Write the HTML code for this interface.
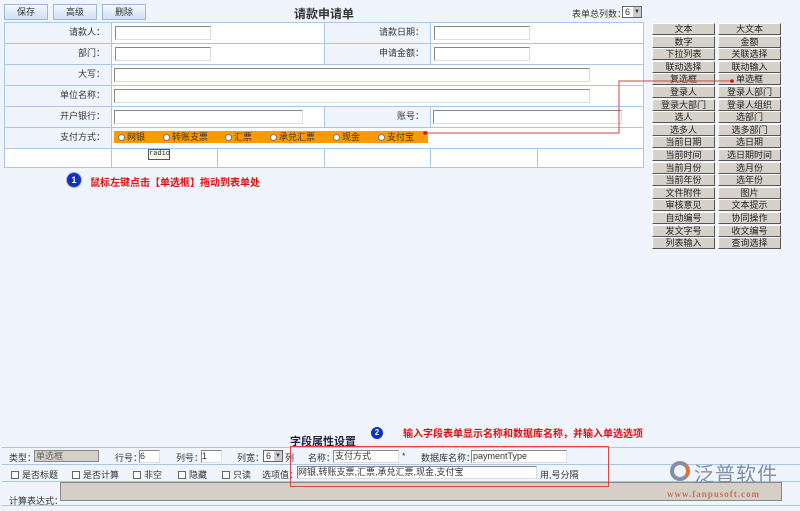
<!DOCTYPE html><html><head><meta charset="utf-8"><style>
*{box-sizing:border-box;margin:0;padding:0}
body{width:800px;height:511px;background:#f0f5fd;font:9px "Liberation Sans","Noto Sans CJK SC",sans-serif;color:#333;position:relative;overflow:hidden}
.a{position:absolute}
.btn{position:absolute;top:4px;height:16px;width:44px;background:linear-gradient(#f4f8ff,#cfdff5);border:1px solid #9ab8e0;text-align:center;line-height:14px;font-size:9px}
.cell{position:absolute;border:1px solid #a8c8ea;background:#fff}
.lab{background:#f0f5fd;text-align:right;padding-right:6px;line-height:19px}
.inp{position:absolute;background:#fff;border:1px solid #888;border-right-color:#ddd;border-bottom-color:#ddd;height:14px}
.rb{position:absolute;width:63px;height:12px;background:#d6d2ca;border:1px solid #fff;border-right-color:#555;border-bottom-color:#555;text-align:center;font-size:9px;line-height:11px;color:#222}
.cb{display:inline-block;width:8px;height:8px;border:1px solid #666;background:#fff;vertical-align:-1px;margin-right:3px}
.r{display:inline-block;width:7px;height:7px;border-radius:50%;background:#fff;border:1px solid #777;margin-right:2px;vertical-align:-1px}
</style></head><body>
<div class="btn" style="left:4px">保存</div>
<div class="btn" style="left:53px">高级</div>
<div class="btn" style="left:102px">删除</div>
<div class="a" style="left:294px;top:5px;font-size:12px;font-weight:bold;color:#333">请款申请单</div>
<div class="a" style="left:572px;top:7px">表单总列数：</div>
<div class="a" style="left:622px;top:6px;width:20px;height:12px;border:1px solid #666;background:#fff;font-size:9px;line-height:10px;padding-left:2px">6<span style="position:absolute;right:0;top:0;width:8px;height:10px;background:#ccc;font-size:6px;text-align:center">▼</span></div>

<div class="a" style="left:4px;top:22px;width:640px;height:146px;background:#fff;border:1px solid #a8c8ea"></div>
<div class="cell lab" style="left:4px;top:22px;width:108px;height:22px">请款人：</div>
<div class="cell" style="left:111px;top:22px;width:214px;height:22px"></div>
<div class="cell lab" style="left:324px;top:22px;width:107px;height:22px">请款日期：</div>
<div class="cell" style="left:430px;top:22px;width:214px;height:22px"></div>
<div class="cell lab" style="left:4px;top:43px;width:108px;height:22px">部门：</div>
<div class="cell" style="left:111px;top:43px;width:214px;height:22px"></div>
<div class="cell lab" style="left:324px;top:43px;width:107px;height:22px">申请金额：</div>
<div class="cell" style="left:430px;top:43px;width:214px;height:22px"></div>
<div class="cell lab" style="left:4px;top:64px;width:108px;height:22px">大写：</div>
<div class="cell" style="left:111px;top:64px;width:533px;height:22px"></div>
<div class="cell lab" style="left:4px;top:85px;width:108px;height:22px">单位名称：</div>
<div class="cell" style="left:111px;top:85px;width:533px;height:22px"></div>
<div class="cell lab" style="left:4px;top:106px;width:108px;height:22px">开户银行：</div>
<div class="cell" style="left:111px;top:106px;width:214px;height:22px"></div>
<div class="cell lab" style="left:324px;top:106px;width:107px;height:22px">账号：</div>
<div class="cell" style="left:430px;top:106px;width:214px;height:22px"></div>
<div class="cell lab" style="left:4px;top:127px;width:108px;height:22px">支付方式：</div>
<div class="cell" style="left:111px;top:127px;width:533px;height:22px"></div>
<div class="cell" style="left:4px;top:148px;width:108px;height:20px"></div>
<div class="cell" style="left:111px;top:148px;width:107px;height:20px"></div>
<div class="cell" style="left:217px;top:148px;width:108px;height:20px"></div>
<div class="cell" style="left:324px;top:148px;width:107px;height:20px"></div>
<div class="cell" style="left:430px;top:148px;width:108px;height:20px"></div>
<div class="cell" style="left:537px;top:148px;width:107px;height:20px"></div>
<div class="inp" style="left:115px;top:26px;width:96px"></div>
<div class="inp" style="left:434px;top:26px;width:96px"></div>
<div class="inp" style="left:115px;top:47px;width:96px"></div>
<div class="inp" style="left:434px;top:47px;width:96px"></div>
<div class="inp" style="left:114px;top:68px;width:476px"></div>
<div class="inp" style="left:114px;top:89px;width:476px"></div>
<div class="inp" style="left:114px;top:110px;width:189px"></div>
<div class="inp" style="left:433px;top:110px;width:189px"></div>
<div class="a" style="left:114px;top:131px;width:314px;height:12px;background:#ff9900;font-size:9px;line-height:12px;color:#333;white-space:nowrap">
<span style="position:absolute;left:4px"><i class="r"></i>网银</span><span style="position:absolute;left:49px"><i class="r"></i>转账支票</span><span style="position:absolute;left:111px"><i class="r"></i>汇票</span><span style="position:absolute;left:156px"><i class="r"></i>承兑汇票</span><span style="position:absolute;left:219px"><i class="r"></i>现金</span><span style="position:absolute;left:264px"><i class="r"></i>支付宝</span></div>
<div class="a" style="left:148px;top:149px;width:22px;height:11px;border:1px solid #555;background:#f8f8e8;font:7px 'Liberation Mono',monospace;line-height:9px;text-align:center">radio</div>
<div class="a" style="left:67px;top:173px;width:14px;height:14px;border-radius:50%;background:#1030c0;color:#fff;font-size:9px;font-weight:bold;text-align:center;line-height:14px;box-shadow:0 0 0 1px #aac">1</div>
<div class="a" style="left:90px;top:174px;font-size:10px;font-weight:bold;color:#e01010">鼠标左键点击【单选框】拖动到表单处</div>

<div class="rb" style="left:652px;top:23px">文本</div><div class="rb" style="left:718px;top:23px">大文本</div>
<div class="rb" style="left:652px;top:35.6px">数字</div><div class="rb" style="left:718px;top:35.6px">金额</div>
<div class="rb" style="left:652px;top:48.2px">下拉列表</div><div class="rb" style="left:718px;top:48.2px">关联选择</div>
<div class="rb" style="left:652px;top:60.8px">联动选择</div><div class="rb" style="left:718px;top:60.8px">联动输入</div>
<div class="rb" style="left:652px;top:73.4px">复选框</div><div class="rb" style="left:718px;top:73.4px">单选框</div>
<div class="rb" style="left:652px;top:86px">登录人</div><div class="rb" style="left:718px;top:86px">登录人部门</div>
<div class="rb" style="left:652px;top:98.6px">登录大部门</div><div class="rb" style="left:718px;top:98.6px">登录人组织</div>
<div class="rb" style="left:652px;top:111.2px">选人</div><div class="rb" style="left:718px;top:111.2px">选部门</div>
<div class="rb" style="left:652px;top:123.8px">选多人</div><div class="rb" style="left:718px;top:123.8px">选多部门</div>
<div class="rb" style="left:652px;top:136.4px">当前日期</div><div class="rb" style="left:718px;top:136.4px">选日期</div>
<div class="rb" style="left:652px;top:149px">当前时间</div><div class="rb" style="left:718px;top:149px">选日期时间</div>
<div class="rb" style="left:652px;top:161.6px">当前月份</div><div class="rb" style="left:718px;top:161.6px">选月份</div>
<div class="rb" style="left:652px;top:174.2px">当前年份</div><div class="rb" style="left:718px;top:174.2px">选年份</div>
<div class="rb" style="left:652px;top:186.8px">文件附件</div><div class="rb" style="left:718px;top:186.8px">图片</div>
<div class="rb" style="left:652px;top:199.4px">审核意见</div><div class="rb" style="left:718px;top:199.4px">文本提示</div>
<div class="rb" style="left:652px;top:212px">自动编号</div><div class="rb" style="left:718px;top:212px">协同操作</div>
<div class="rb" style="left:652px;top:224.6px">发文字号</div><div class="rb" style="left:718px;top:224.6px">收文编号</div>
<div class="rb" style="left:652px;top:237.2px">列表输入</div><div class="rb" style="left:718px;top:237.2px">查询选择</div>

<div class="a" style="left:290px;top:433px;font-size:11px;font-weight:bold;color:#224">字段属性设置</div>
<div class="a" style="left:371px;top:427px;width:12px;height:12px;border-radius:50%;background:#1030c0;color:#fff;font-size:8px;font-weight:bold;text-align:center;line-height:12px">2</div>
<div class="a" style="left:403px;top:425px;font-size:10px;font-weight:bold;color:#e01010">输入字段表单显示名称和数据库名称，并输入单选选项</div>
<div class="a" style="left:2px;top:447px;width:798px;height:64px;border-top:1px solid #a8c8ea;background:#f0f5fd"></div>
<div class="a" style="left:2px;top:464px;width:798px;border-top:1px solid #a8c8ea"></div>
<div class="a" style="left:2px;top:481px;width:798px;border-top:1px solid #a8c8ea"></div>
<div class="a" style="left:2px;top:505px;width:798px;border-top:1px solid #a8c8ea"></div>
<div class="a" style="left:9px;top:451px">类型：</div>
<div class="a" style="left:34px;top:450px;width:65px;height:12px;background:#d4d0c8;border:1px solid #888;color:#666;padding-left:1px;line-height:10px">单选框</div>
<div class="a" style="left:115px;top:451px">行号：</div><div class="inp" style="left:139px;top:450px;width:21px;height:13px;line-height:11px">6</div>
<div class="a" style="left:176px;top:451px">列号：</div><div class="inp" style="left:201px;top:450px;width:21px;height:13px;line-height:11px">1</div>
<div class="a" style="left:237px;top:451px">列宽：</div><div class="a" style="left:263px;top:450px;width:20px;height:12px;border:1px solid #666;background:#fff;line-height:10px;padding-left:2px">6<span style="position:absolute;right:0;top:0;width:8px;height:10px;background:#ccc;font-size:6px;text-align:center">▼</span></div>
<div class="a" style="left:285px;top:451px">列</div>
<div class="a" style="left:308px;top:451px">名称：</div><div class="inp" style="left:333px;top:450px;width:66px;height:13px;line-height:11px;padding-left:1px">支付方式</div>
<div class="a" style="left:402px;top:451px">*</div>
<div class="a" style="left:421px;top:451px">数据库名称：</div><div class="inp" style="left:471px;top:450px;width:96px;height:13px;line-height:11px;padding-left:1px">paymentType</div>
<div class="a" style="left:11px;top:468px"><span class="cb"></span>是否标题</div>
<div class="a" style="left:72px;top:468px"><span class="cb"></span>是否计算</div>
<div class="a" style="left:133px;top:468px"><span class="cb"></span>非空</div>
<div class="a" style="left:178px;top:468px"><span class="cb"></span>隐藏</div>
<div class="a" style="left:222px;top:468px"><span class="cb"></span>只读</div>
<div class="a" style="left:262px;top:468px">选项值：</div>
<div class="inp" style="left:297px;top:466px;width:240px;height:13px;line-height:11px;white-space:nowrap;overflow:hidden">网银,转账支票,汇票,承兑汇票,现金,支付宝</div>
<div class="a" style="left:540px;top:468px">用,号分隔</div>
<div class="a" style="left:9px;top:494px">计算表达式：</div>
<div class="a" style="left:60px;top:482px;width:722px;height:19px;background:#d4d0c8;border:1px solid #888"></div>
<div class="a" style="left:670px;top:461px;width:20px;height:20px;border-radius:50%;border:4px solid #8090a8;border-right-color:#e07040"></div>
<div class="a" style="left:694px;top:458px;font-size:20px;color:#8090a8;letter-spacing:1px">泛普软件</div>
<div class="a" style="left:667px;top:489px;font:bold 9px 'Liberation Serif',serif;color:#d07050;letter-spacing:1px">www.fanpusoft.com</div>
<svg class="a" style="left:0;top:0" width="800" height="511"><polyline points="425,133 619,133 619,81 732,81" fill="none" stroke="#c44" stroke-width="1"/><circle cx="425" cy="133" r="1.8" fill="#e00"/><circle cx="732" cy="81" r="1.8" fill="#e00"/>
<rect x="290.5" y="446.5" width="318" height="40" fill="none" stroke="#d44" stroke-width="1"/></svg>
</body></html>
